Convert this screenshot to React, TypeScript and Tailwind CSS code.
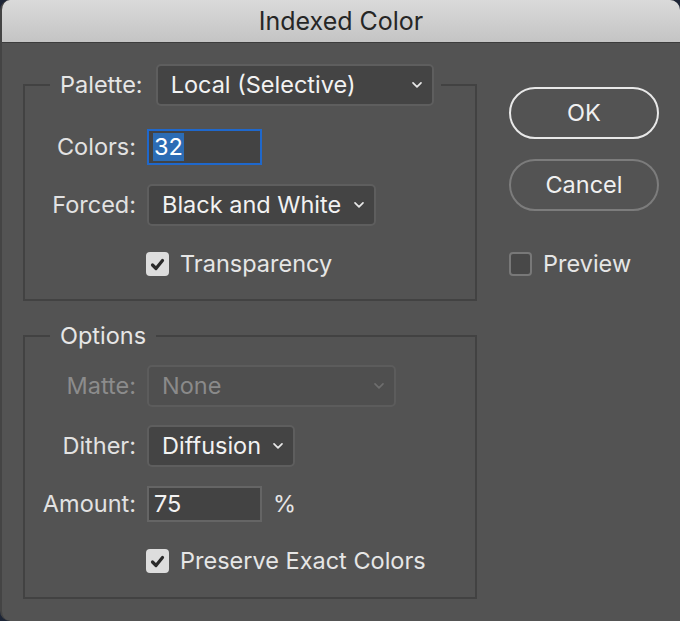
import React from 'react';

const Chevron: React.FC<{ dim?: boolean }> = ({ dim }) => (
  <svg width="12" height="8" viewBox="0 0 12 8" className={dim ? 'text-[#6e6e6e]' : 'text-[#e8e8e8]'}>
    <path d="M2 1.8 L6 5.8 L10 1.8" fill="none" stroke="currentColor" strokeWidth="1.7" strokeLinecap="round" strokeLinejoin="round" />
  </svg>
);

const Select: React.FC<{ value: string; width: string; disabled?: boolean }> = ({ value, width, disabled }) => (
  <div
    className={`${width} h-[42px] flex items-center justify-between pl-[13px] pr-[9px] rounded-[5px] border-2 ${
      disabled ? 'bg-[#4f4f4f] border-[#5c5c5c] text-[#8a8a8a]' : 'bg-[#444444] border-[#5e5e5e] text-[#f2f2f2]'
    }`}
  >
    <span>{value}</span>
    <Chevron dim={disabled} />
  </div>
);

const Check: React.FC<{ checked?: boolean }> = ({ checked }) =>
  checked ? (
    <div className="w-[23px] h-[24px] rounded-[4px] bg-[#dddddd] flex items-center justify-center">
      <svg width="15" height="13" viewBox="0 0 15 13">
        <path d="M2.5 7 L6 10.5 L12.5 2.5" fill="none" stroke="#2a2a2a" strokeWidth="3.2" strokeLinecap="round" strokeLinejoin="round" />
      </svg>
    </div>
  ) : (
    <div className="w-[23px] h-[24px] rounded-[4px] bg-[#484848] border-2 border-[#787878]" />
  );

const Row: React.FC<{ label: string; dim?: boolean; className?: string; children: React.ReactNode }> = ({
  label,
  dim,
  className,
  children,
}) => (
  <div className={`flex items-center gap-[11px] ${className ?? ''}`}>
    <span className={`w-[111px] text-right whitespace-nowrap ${dim ? 'text-[#8c8c8c]' : 'text-[#e2e2e2]'}`}>{label}</span>
    {children}
  </div>
);

export default function App() {
  return (
    <div className="w-[680px] h-[621px] bg-[#1d2536] overflow-hidden">
      <div
        className="w-[680px] h-[621px] rounded-t-[10px] rounded-bl-[10px] overflow-hidden bg-[#535353] border-l-2 border-[#444444] text-[23.5px] leading-[28px]"
        style={{ fontFamily: 'Inter, "Liberation Sans", sans-serif' }}
      >
        {/* Title bar */}
        <div className="h-[43px] bg-gradient-to-b from-[#dadada] to-[#c4c4c4] border-b border-[#3c3c3c] flex items-center justify-center text-[#262626] text-[25px]">
          Indexed Color
        </div>

        <div className="flex pl-[21px] pt-[21px]">
          {/* Left column */}
          <div className="w-[454px]">
            <fieldset className="border-2 border-[#424242] pb-[23px]">
              <legend className="ml-[25px] pl-[10px] pr-[7px] flex items-center gap-[13px]">
                <span className="text-[#e6e6e6]">Palette:</span>
                <Select value="Local (Selective)" width="w-[278px]" />
              </legend>
              <Row label="Colors:" className="mt-[23px] h-[36px]">
                <div className="w-[115px] h-[36px] border-2 border-[#1f68cc] bg-[#434343] flex items-center pl-[4px]">
                  <span className="bg-[#2c6cb4] text-white px-[1px]">32</span>
                </div>
              </Row>
              <Row label="Forced:" className="mt-[19px]">
                <Select value="Black and White" width="w-[229px]" />
              </Row>
              <div className="mt-[26px] h-[24px] flex items-center gap-[11px] pl-[121px]">
                <Check checked />
                <span className="text-[#e6e6e6]">Transparency</span>
              </div>
            </fieldset>

            <fieldset className="mt-[21px] border-2 border-[#424242] pb-[24px]">
              <legend className="ml-[25px] pl-[10px] pr-[10px] text-[#e6e6e6]">Options</legend>
              <Row label="Matte:" dim className="mt-[15px]">
                <Select value="None" width="w-[249px]" disabled />
              </Row>
              <Row label="Dither:" className="mt-[18px]">
                <Select value="Diffusion" width="w-[148px]" />
              </Row>
              <Row label="Amount:" className="mt-[19px]">
                <div className="w-[115px] h-[36px] border-2 border-[#656565] bg-[#434343] flex items-center pl-[5px] text-[#f2f2f2]">
                  75
                </div>
                <span className="text-[#e6e6e6]">%</span>
              </Row>
              <div className="mt-[27px] h-[24px] flex items-center gap-[11px] pl-[121px]">
                <Check checked />
                <span className="text-[#e6e6e6]">Preserve Exact Colors</span>
              </div>
            </fieldset>
          </div>

          {/* Right column */}
          <div className="ml-[32px] pt-[23px] w-[150px] flex flex-col">
            <button className="h-[52px] rounded-full border-2 border-[#e8e8e8] text-[#f0f0f0]">OK</button>
            <button className="mt-[20px] h-[52px] rounded-full border-2 border-[#7c7c7c] text-[#f0f0f0]">Cancel</button>
            <div className="mt-[39px] flex items-center gap-[11px]">
              <Check />
              <span className="text-[#e6e6e6]">Preview</span>
            </div>
          </div>
        </div>
      </div>
    </div>
  );
}
